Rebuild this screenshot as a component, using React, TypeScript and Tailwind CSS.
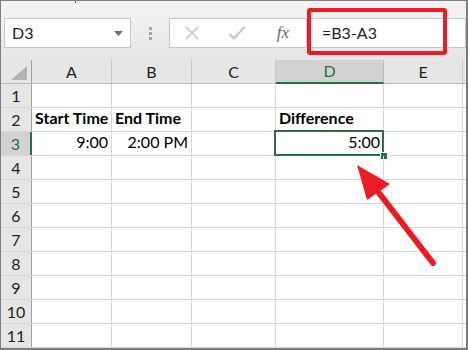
import React from "react"

const COLS = [
    { key: "A", w: "w-[80px]" },
    { key: "B", w: "w-[80px]" },
    { key: "C", w: "w-[84px]" },
    { key: "D", w: "w-[108px]" },
    { key: "E", w: "w-[79px]" },
]

type Cell = { text: string; bold?: boolean; right?: boolean }

const DATA: Record<number, Record<string, Cell>> = {
    2: {
        A: { text: "Start Time", bold: true },
        B: { text: "End Time", bold: true },
        D: { text: "Difference", bold: true },
    },
    3: {
        A: { text: "9:00", right: true },
        B: { text: "2:00 PM", right: true },
        D: { text: "5:00", right: true },
    },
}

function FormulaBar() {
    return (
        <div className="relative h-[59px] bg-gradient-to-b from-[#f4f4f4] to-[#e6e6e6] flex items-start pt-[17px] pl-[3px]">
            <span className="absolute left-[74px] top-0 w-px h-[2px] bg-[#555]" />
            <div className="w-[127px] h-[30px] bg-white border border-[#c6c6c6] flex items-center justify-between pl-[7px] pr-[7px]">
                <span className="text-[16px] text-[#222]">D3</span>
                <svg width="9" height="5" viewBox="0 0 9 5">
                    <path d="M0 0 L9 0 L4.5 5 Z" fill="#6f6f6f" />
                </svg>
            </div>
            <div className="w-[38px] h-[30px] flex flex-col items-center justify-center gap-[2px]">
                <span className="w-[3px] h-[3px] bg-[#a6a6a6]" />
                <span className="w-[3px] h-[3px] bg-[#a6a6a6]" />
                <span className="w-[3px] h-[3px] bg-[#a6a6a6]" />
            </div>
            <div className="w-[138px] h-[30px] bg-white border border-[#c6c6c6] flex items-center">
                <div className="w-[44px] flex justify-center">
                    <svg width="16" height="16" viewBox="0 0 16 16">
                        <path d="M2 2 L14 14 M14 2 L2 14" stroke="#c4c4c4" strokeWidth="1.6" />
                    </svg>
                </div>
                <div className="w-[46px] flex justify-center">
                    <svg width="18" height="16" viewBox="0 0 18 16">
                        <path d="M1.5 9 L6 13.5 L16.5 2" stroke="#c4c4c4" strokeWidth="2.2" fill="none" />
                    </svg>
                </div>
                <div className="flex-1 flex justify-center">
                    <span className="text-[17px] italic text-[#666] font-['Liberation_Serif',serif]">fx</span>
                </div>
            </div>
            <div className="flex-1 h-[30px] bg-white border-y border-r border-[#c6c6c6] flex items-center pl-[15px]">
                <span className="text-[16px] text-[#222]">=B3-A3</span>
            </div>
        </div>
    )
}

function HeaderRow() {
    return (
        <div className="flex h-[24px] bg-[#e6e6e6] border-b border-[#b9b9b9]">
            <div className="w-[31px] border-r border-[#9e9e9e] relative">
                <svg className="absolute right-[4px] bottom-[3px]" width="16" height="14" viewBox="0 0 16 14">
                    <path d="M16 0 L16 14 L0 14 Z" fill="#b3b3b3" />
                </svg>
            </div>
            {COLS.map((c) =>
                c.key === "D" ? (
                    <div key={c.key} className={`${c.w} border-r border-[#b9b9b9] bg-[#d2d2d2] border-b-2 border-b-[#217346] -mb-px flex items-center justify-center text-[16px] text-[#217346]`}>
                        {c.key}
                    </div>
                ) : (
                    <div key={c.key} className={`${c.w} border-r border-[#c8c8c8] flex items-center justify-center text-[16px] text-[#222]`}>
                        {c.key}
                    </div>
                )
            )}
            <div className="flex-1" />
        </div>
    )
}

function Row({ n }: { n: number }) {
    const active = n === 3
    return (
        <div className="flex h-[24px] border-b border-[#d6d6d6]">
            <div
                className={
                    active
                        ? "w-[31px] bg-[#d2d2d2] border-r-2 border-[#217346] flex items-center justify-center text-[16px] text-[#217346]"
                        : "w-[31px] bg-[#e6e6e6] border-r border-[#9e9e9e] flex items-center justify-center text-[16px] text-[#222]"
                }
            >
                {n}
            </div>
            {COLS.map((c) => {
                const cell = DATA[n]?.[c.key]
                const selected = active && c.key === "D"
                return (
                    <div
                        key={c.key}
                        className={`${c.w} border-r border-[#d6d6d6] relative flex items-end pb-px px-[3px] text-[16px] text-black whitespace-nowrap ${cell?.right ? "justify-end" : "justify-start"} ${cell?.bold ? "font-bold" : ""}`}
                    >
                        {cell?.text}
                        {selected && (
                            <>
                                <div className="absolute -left-[2px] -top-[2px] -right-px -bottom-px border-2 border-[#217346]" />
                                <div className="absolute -right-[4px] -bottom-[4px] w-[6px] h-[6px] bg-[#217346] outline outline-1 outline-white" />
                            </>
                        )}
                    </div>
                )
            })}
            <div className="flex-1" />
        </div>
    )
}

export default function App() {
    return (
        <div className="relative w-[468px] h-[350px] overflow-hidden bg-white border-t border-l border-r-2 border-b-2 border-[#7d7d7d] font-['Lato',sans-serif]">
            <FormulaBar />
            <HeaderRow />
            {Array.from({ length: 11 }, (_, i) => (
                <Row key={i} n={i + 1} />
            ))}

            {/* callouts drawn over the sheet */}
            <div className="absolute left-[306px] top-[7px] w-[140px] h-[47px] border-4 border-[#ed1c24] rounded-[3px] pointer-events-none" />
            <svg className="absolute left-0 top-0 pointer-events-none" width="468" height="350" viewBox="0 0 468 350">
                <line x1="432" y1="262" x2="378" y2="192" stroke="#ed1c24" strokeWidth="6" strokeLinecap="round" />
                <polygon points="356,164 366,199 389,183" fill="#ed1c24" />
            </svg>
        </div>
    )
}
